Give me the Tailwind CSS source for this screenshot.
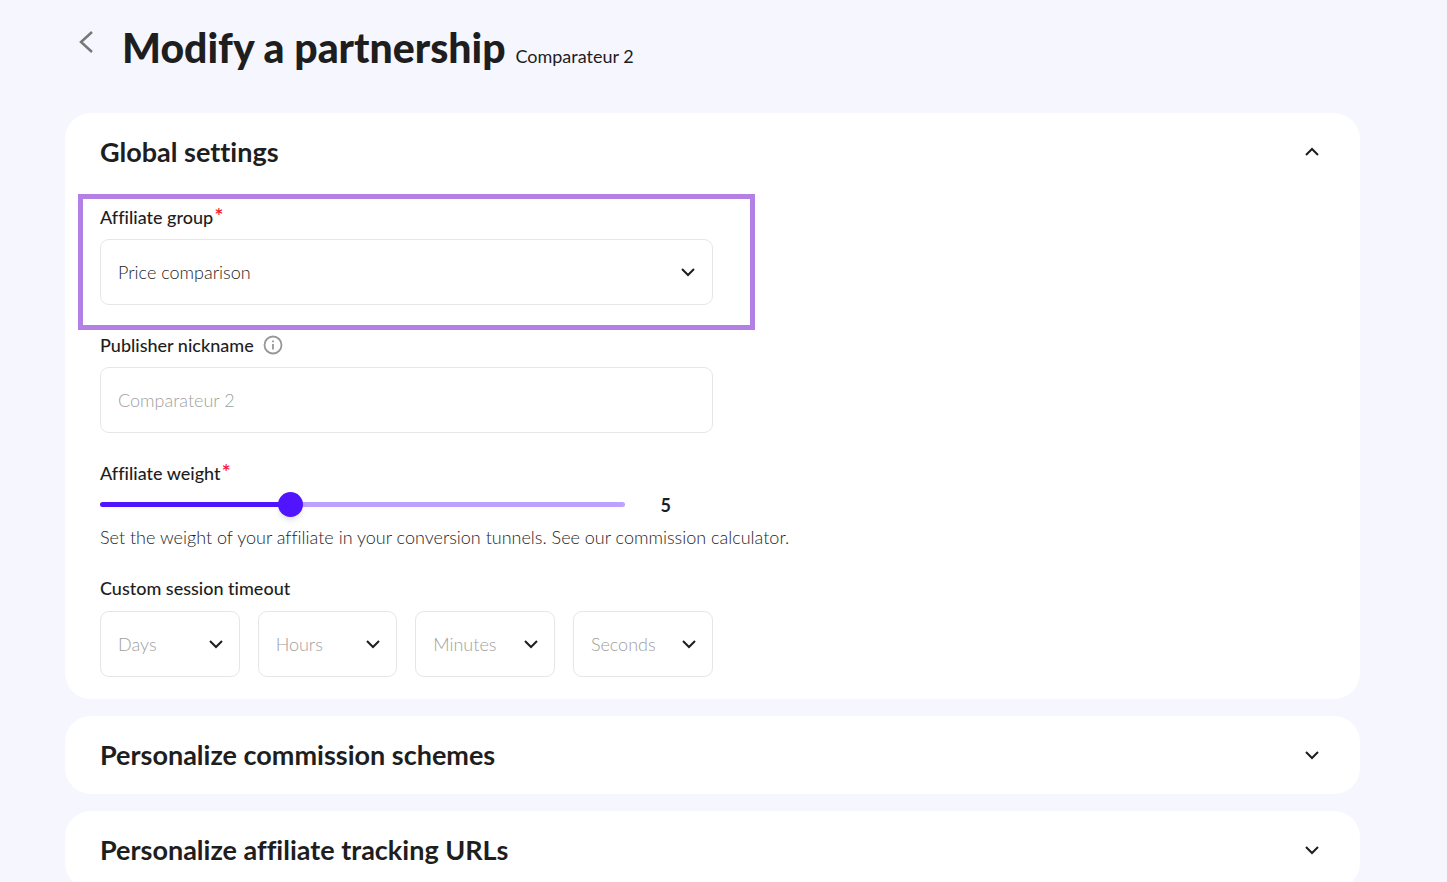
<!DOCTYPE html>
<html lang="en">
<head>
  <meta charset="UTF-8" />
  <meta name="viewport" content="width=device-width, initial-scale=1.0" />
  <title>Modify a partnership</title>
  <script src="https://cdn.jsdelivr.net/npm/@tailwindcss/browser@4"></script>
</head>
<body class="bg-[#f6f6ff] text-[#1e1e1e] font-['Lato',sans-serif] text-[18px] leading-[24px] font-light [font-variant-ligatures:none] min-h-screen overflow-x-hidden">
  <header class="flex items-start pl-[78px] pr-[87px] pt-[23px]">
    <a href="#" aria-label="Back" class="mt-[7px] mr-7 text-[#777777]">
      <svg class="w-4 h-6" viewBox="0 0 16 24" fill="none" stroke="currentColor" stroke-width="2.500"><path d="M14 2 L3 12 L14 22" /></svg>
    </a>
    <h1 class="text-[41px] leading-[50px] font-black">Modify a partnership <small class="text-[18px] leading-none font-normal">Comparateur 2</small></h1>
  </header>

  <main class="pl-[65px] pr-[87px] pt-10 pb-10 flex flex-col gap-[17px]">
    <section class="bg-white rounded-[26px] px-[35px] pb-[22px]">
      <div class="h-[78px] flex items-center justify-between">
        <h2 class="text-[27px] leading-[36px] font-bold">Global settings</h2>
        <button type="button" aria-label="Collapse" class="mr-[6px]">
          <svg class="w-[14px] h-[14px]" viewBox="0 0 14 14" fill="none" stroke="currentColor" stroke-width="2"><path d="M1 10 L7 4 L13 10" /></svg>
        </button>
      </div>

      <form class="pt-[13px]">
        <div class="w-1/2 flex flex-col gap-[27px]">
          <div class="relative">
            <label for="group" class="flex items-center h-[25px] mb-[10px] font-medium">Affiliate group<span class="text-[#f5142b] text-[22px] self-start leading-[24px] pl-px">*</span></label>
            <div class="relative">
              <select id="group" class="appearance-none w-full h-[66px] border border-[#e6e6e6] rounded-[9px] px-[17px] bg-white">
                <option>Price comparison</option>
              </select>
              <svg class="absolute right-[18px] top-[26px] w-[14px] h-[14px] pointer-events-none" viewBox="0 0 14 14" fill="none" stroke="currentColor" stroke-width="2"><path d="M1 4 L7 10 L13 4" /></svg>
            </div>
            <!-- highlight around the group field -->
            <div class="absolute -left-[22px] -right-[42px] -top-[10px] -bottom-[25px] border-[5px] border-[#b380e6] pointer-events-none"></div>
          </div>

          <div>
            <div class="flex items-center h-[25px] mb-[10px]">
              <label for="nickname" class="font-medium">Publisher nickname</label>
              <svg class="w-5 h-5 ml-[9px] text-[#979797]" viewBox="0 0 20 20" fill="none" stroke="currentColor" stroke-width="1.800"><circle cx="10" cy="10" r="8.500" /><path d="M10 9 V14.500 M10 5.500 V7.300" /></svg>
            </div>
            <input id="nickname" type="text" placeholder="Comparateur 2" class="block w-full h-[66px] border border-[#e6e6e6] rounded-[9px] px-[17px] placeholder:text-[#a0a0a0]" />
          </div>

          <div>
            <label for="weight" class="flex items-center h-[25px] font-medium">Affiliate weight<span class="text-[#f5142b] text-[22px] self-start leading-[24px] pl-px">*</span></label>
            <div class="flex items-center h-[25px] mt-[7px]">
              <input id="weight" type="range" min="0" max="14" value="5" class="appearance-none flex-1 h-[5px] rounded-full bg-[linear-gradient(to_right,#5014ff_36%,#bda1ff_36%)] [&::-webkit-slider-thumb]:appearance-none [&::-webkit-slider-thumb]:size-[25px] [&::-webkit-slider-thumb]:rounded-full [&::-webkit-slider-thumb]:bg-[#5014ff] [&::-webkit-slider-thumb]:shadow-md" />
              <output for="weight" class="w-[88px] pl-9 font-bold">5</output>
            </div>
            <p class="mt-2 whitespace-nowrap">Set the weight of your affiliate in your conversion tunnels. See our commission calculator.</p>
          </div>

          <fieldset>
            <legend class="h-[25px] leading-[25px] mb-[10px] font-medium">Custom session timeout</legend>
            <div class="grid grid-cols-4 gap-[18px] text-[#a0a0a0]">
              <div class="relative">
                <select aria-label="Days" class="appearance-none w-full h-[66px] border border-[#e6e6e6] rounded-[9px] px-[17px] bg-white"><option>Days</option></select>
                <svg class="absolute right-[17px] top-[26px] w-[14px] h-[14px] text-[#1e1e1e] pointer-events-none" viewBox="0 0 14 14" fill="none" stroke="currentColor" stroke-width="2"><path d="M1 4 L7 10 L13 4" /></svg>
              </div>
              <div class="relative">
                <select aria-label="Hours" class="appearance-none w-full h-[66px] border border-[#e6e6e6] rounded-[9px] px-[17px] bg-white"><option>Hours</option></select>
                <svg class="absolute right-[17px] top-[26px] w-[14px] h-[14px] text-[#1e1e1e] pointer-events-none" viewBox="0 0 14 14" fill="none" stroke="currentColor" stroke-width="2"><path d="M1 4 L7 10 L13 4" /></svg>
              </div>
              <div class="relative">
                <select aria-label="Minutes" class="appearance-none w-full h-[66px] border border-[#e6e6e6] rounded-[9px] px-[17px] bg-white"><option>Minutes</option></select>
                <svg class="absolute right-[17px] top-[26px] w-[14px] h-[14px] text-[#1e1e1e] pointer-events-none" viewBox="0 0 14 14" fill="none" stroke="currentColor" stroke-width="2"><path d="M1 4 L7 10 L13 4" /></svg>
              </div>
              <div class="relative">
                <select aria-label="Seconds" class="appearance-none w-full h-[66px] border border-[#e6e6e6] rounded-[9px] px-[17px] bg-white"><option>Seconds</option></select>
                <svg class="absolute right-[17px] top-[26px] w-[14px] h-[14px] text-[#1e1e1e] pointer-events-none" viewBox="0 0 14 14" fill="none" stroke="currentColor" stroke-width="2"><path d="M1 4 L7 10 L13 4" /></svg>
              </div>
            </div>
          </fieldset>
        </div>
      </form>
    </section>

    <section class="bg-white rounded-[26px] px-[35px] h-[78px] flex items-center justify-between">
      <h2 class="text-[27px] leading-[36px] font-bold">Personalize commission schemes</h2>
      <button type="button" aria-label="Expand" class="mr-[6px]">
        <svg class="w-[14px] h-[14px]" viewBox="0 0 14 14" fill="none" stroke="currentColor" stroke-width="2"><path d="M1 4 L7 10 L13 4" /></svg>
      </button>
    </section>

    <section class="bg-white rounded-[26px] px-[35px] h-[78px] flex items-center justify-between">
      <h2 class="text-[27px] leading-[36px] font-bold">Personalize affiliate tracking URLs</h2>
      <button type="button" aria-label="Expand" class="mr-[6px]">
        <svg class="w-[14px] h-[14px]" viewBox="0 0 14 14" fill="none" stroke="currentColor" stroke-width="2"><path d="M1 4 L7 10 L13 4" /></svg>
      </button>
    </section>
  </main>
</body>
</html>
